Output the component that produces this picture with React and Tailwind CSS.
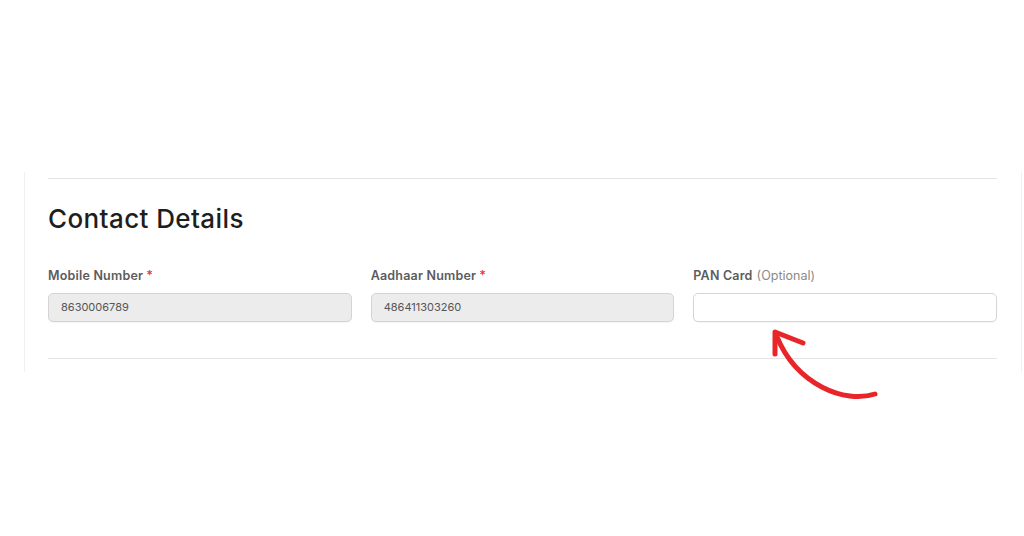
const fields = [
  { label: "Mobile Number", required: true, value: "8630006789" },
  { label: "Aadhaar Number", required: true, value: "486411303260" },
  { label: "PAN Card", optional: true, value: "" },
];

function Field({ label, required, optional, value }) {
  const filled = value !== "";
  return (
    <div className="flex flex-col">
      <label className="text-[12.5px] leading-[16px] font-semibold text-[#5c5c5c] tracking-[0.2px]">
        {label}
        {required && <span className="text-[#e5393b] ml-[3px]">*</span>}
        {optional && (
          <span className="font-normal text-[#8a8a8a] ml-[4px] tracking-normal">(Optional)</span>
        )}
      </label>
      <div
        className={
          filled
            ? "mt-[9px] h-[29px] rounded-[5px] border border-[#d4d4d4] bg-[#ececec] pl-[12px] flex items-center text-[11px] text-[#555] shadow-[0_1px_1px_rgba(0,0,0,0.04)]"
            : "mt-[9px] h-[29px] rounded-[5px] border border-[#d6d6d6] bg-white shadow-[0_1px_1px_rgba(0,0,0,0.04)]"
        }
      >
        {value}
      </div>
    </div>
  );
}

export default function App() {
  return (
    <div
      className="relative w-full h-[536px] bg-white overflow-hidden"
      style={{ fontFamily: "Inter, 'Noto Sans', sans-serif" }}
    >
      <div className="pt-[172px] pl-[24px] w-[1022px]">
        <div className="h-[200px] border-l border-r border-[#f0f0f0] pl-[23px] pr-[24px] pt-[6px]">
          <div className="border-t border-[#e4e4e4]" />
          <h2 className="mt-[24px] text-[26px] leading-[32px] font-medium text-[#1e1e1e] tracking-[0.4px]">
            Contact Details
          </h2>
          <div className="mt-[33px] grid grid-cols-3 gap-[19px]">
            {fields.map((f) => (
              <Field key={f.label} {...f} />
            ))}
          </div>
          <div className="mt-[36px] border-t border-[#e4e4e4]" />
        </div>
      </div>

      <svg
        className="absolute left-0 top-0 pointer-events-none"
        width="1024"
        height="536"
        viewBox="0 0 1024 536"
      >
        <path
          d="M875 394 C 845 404, 797 385, 777 337"
          fill="none"
          stroke="#e8262a"
          strokeWidth="5"
          strokeLinecap="round"
        />
        <path
          d="M775 354 L775 332 L803 343"
          fill="none"
          stroke="#e8262a"
          strokeWidth="5"
          strokeLinecap="round"
          strokeLinejoin="round"
        />
      </svg>
    </div>
  );
}
